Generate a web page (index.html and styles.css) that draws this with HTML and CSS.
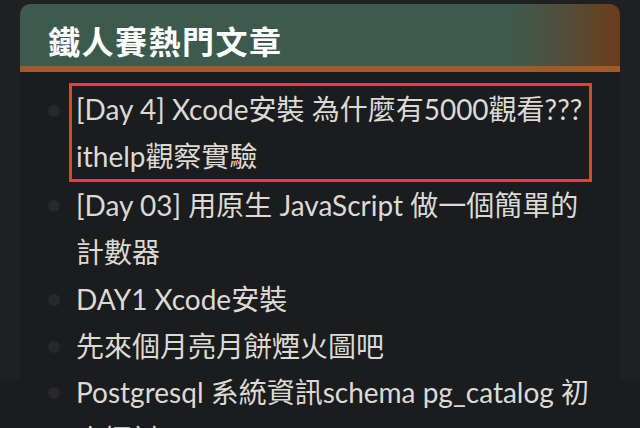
FILE: index.html
```html
<!DOCTYPE html>
<html lang="zh-Hant">
<head>
<meta charset="utf-8">
<link rel="stylesheet" href="styles.css">
</head>
<body>
<section class="card">
  <header class="card-head">
    <h2 class="card-title">鐵人賽熱門文章</h2>
  </header>
  <ul class="post-list">
    <li class="post"><a class="post-link is-marked">[Day 4] Xcode安裝 為什麼有5000觀看??? ithelp觀察實驗</a></li>
    <li class="post"><a class="post-link">[Day 03] 用原生 JavaScript 做一個簡單的計數器</a></li>
    <li class="post"><a class="post-link">DAY1 Xcode安裝</a></li>
    <li class="post"><a class="post-link">先來個月亮月餅煙火圖吧</a></li>
    <li class="post"><a class="post-link">Postgresql 系統資訊schema pg_catalog 初步探討</a></li>
  </ul>
</section>
</body>
</html>
```

FILE: styles.css
```css
html, body {
  margin: 0;
  padding: 0;
}
body {
  width: 640px;
  height: 428px;
  overflow: hidden;
  background: linear-gradient(to bottom, #1f2022 0, #1f2022 380px, #1b1c1e 380px);
  font-family: Lato, "Noto Sans CJK TC", sans-serif;
  padding: 4px 20px 0;
  box-sizing: border-box;
}
.card {
  background: #1b1c1e;
  border-radius: 10px 10px 0 0;
  min-height: 500px;
}
.card-head {
  height: 62px;
  box-sizing: content-box;
  border-radius: 10px 10px 0 0;
  border-bottom: 6px solid #a35a27;
  background: linear-gradient(to right, #3d5a4e 0, #3d5a4e 82%, #4c5240 88%, #6a3d1a 100%);
  display: flex;
  align-items: center;
  padding-left: 28px;
}
.card-title {
  margin: 0;
  color: #ffffff;
  font-family: "Noto Sans CJK TC", sans-serif;
  font-size: 32px;
  font-weight: 700;
  letter-spacing: 1.5px;
  line-height: 1;
  padding-top: 10px;
}
.post-list {
  list-style: none;
  margin: 0;
  padding: 11px 28px 0 56px;
}
.post {
  position: relative;
  font-size: 28px;
  line-height: 46.7px;
  color: #dcdad5;
}
.post::before {
  content: "";
  position: absolute;
  left: -28px;
  top: 18px;
  width: 12px;
  height: 12px;
  border-radius: 50%;
  background: #27282a;
}
.post:first-child::before {
  top: 22px;
}
.post-link {
  display: block;
  color: inherit;
  text-decoration: none;
}
.post-link.is-marked {
  border: 3px solid #e8402a;
  margin-left: -7px;
  padding-left: 4px;
}
```
